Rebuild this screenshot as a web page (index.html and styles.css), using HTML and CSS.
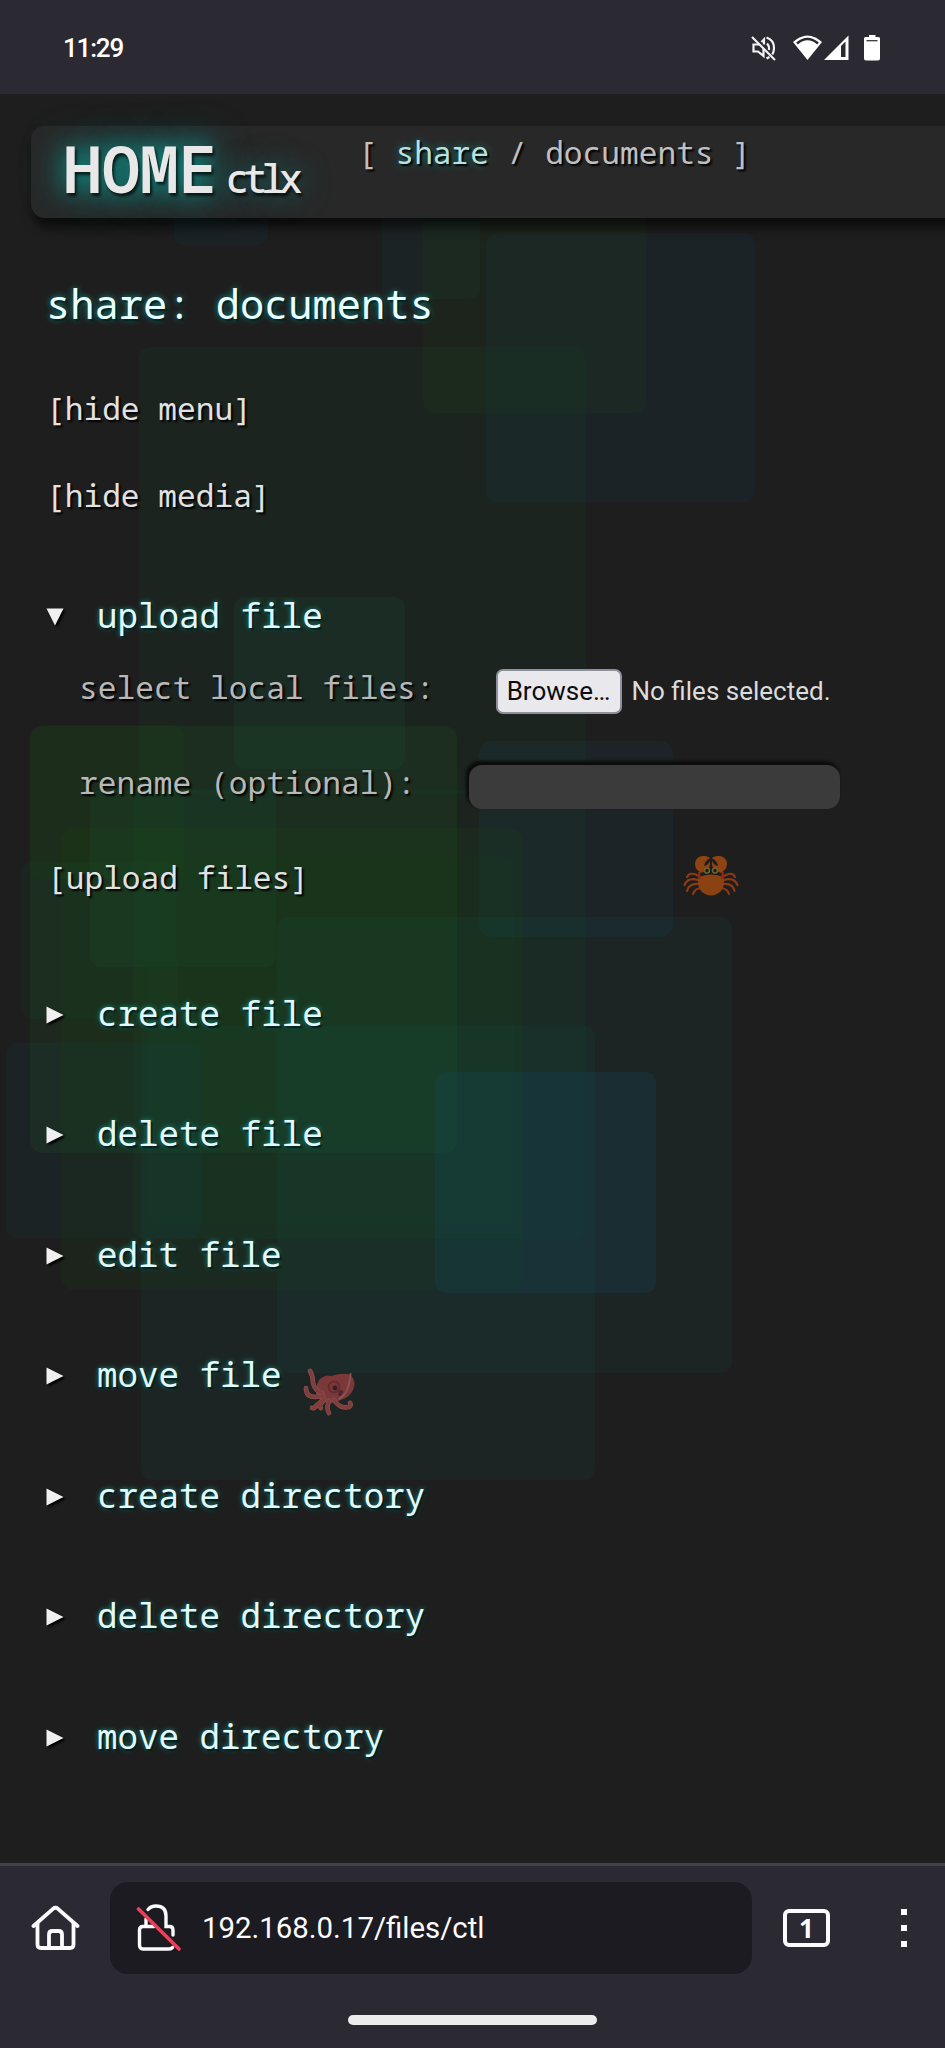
FILE: index.html
```html
<!DOCTYPE html>
<html lang="en">
<head>
<meta charset="utf-8">
<title>share: documents</title>
<link rel="stylesheet" href="styles.css">
</head>
<body>
<div class="screen">
  <div class="statusbar">
    <span class="clock">11:29</span>
    <svg class="status-icons" width="132" height="28" viewBox="750 34 132 28">
      <g fill="none" stroke="#f4f4f6" stroke-width="2.2">
        <path d="M752 37L775 60"/>
        <path d="M759 44.500H753.500V51.500H758L763.500 56V49"/>
        <path d="M761.500 42L764 39.500V44.500"/>
        <path d="M767 43.500Q769.500 46 769 50"/>
        <path d="M766.500 37.500Q774 40 774 48Q774 51.500 772.300 54.500"/>
        <path d="M766.500 58.500L769.500 57"/>
      </g>
      <path d="M793 42Q807.500 29 822 42L807.500 60Z" fill="#fff"/>
      <path d="M797 43.500Q807.500 34.500 818 43.500" fill="none" stroke="#2b2a33" stroke-width="2.6"/>
      <path d="M824 60L848.500 35.500V60Z" fill="#fff"/>
      <path d="M841 46L845.500 41.500V57H841Z" fill="#2b2a33"/>
      <path d="M869 35H875.500V37H878.500Q880 37 880 38.500V58.500Q880 60.500 878 60.500H866Q864 60.500 864 58.500V38.500Q864 37 865.500 37H869Z" fill="#fff"/>
      <path d="M866.500 40.700H877.500" stroke="#2b2a33" stroke-width="1.2"/>
    </svg>
  </div>

  <div class="page">
    <svg class="backdrop" width="945" height="1769" viewBox="0 94 945 1769">
      <g class="squares">
        <rect class="blue" x="174" y="151" width="94" height="94" rx="10"/>
        <rect class="slate" x="382" y="201" width="98" height="98" rx="10"/>
        <rect class="moss" x="423" y="190" width="223" height="223" rx="11"/>
        <rect class="blue" x="486" y="233" width="269" height="269" rx="11"/>
        <rect class="green" x="139" y="347" width="447" height="447" rx="11"/>
        <rect class="jade" x="234" y="597" width="171" height="172" rx="11"/>
        <rect class="leaf" x="30" y="726" width="427" height="427" rx="13"/>
        <rect class="moss" x="29" y="725" width="155" height="154" rx="13"/>
        <rect class="jade" x="90" y="790" width="186" height="177" rx="11"/>
        <rect class="green" x="133" y="790" width="452" height="449" rx="11"/>
        <rect class="moss" x="61" y="828" width="462" height="462" rx="13"/>
        <rect class="faint" x="147" y="857" width="367" height="367" rx="11"/>
        <rect class="green" x="21" y="862" width="157" height="157" rx="11"/>
        <rect class="cyan" x="479" y="741" width="194" height="196" rx="13"/>
        <rect class="teal" x="277" y="917" width="455" height="456" rx="11"/>
        <rect class="teal" x="141" y="1026" width="454" height="454" rx="11"/>
        <rect class="slate" x="6" y="1043" width="195" height="195" rx="11"/>
        <rect class="azure" x="435" y="1072" width="221" height="221" rx="11"/>
      </g>
      <g class="crab">
        <g fill="none" stroke="#8d3914" stroke-width="2.200" stroke-linecap="round">
          <path d="M699 876Q690 871 687 877M698 880Q688 877 684.500 885M699 884Q689 883 687 891M702 888Q695 888 693 894"/>
          <path d="M724 876Q732 871 735 877M724 880Q734 877 737.500 885M723 884Q733 883 734.500 891M720 888Q727 888 729 894"/>
        </g>
        <path d="M701 873Q693 868 695.500 861Q698 855.500 704.500 856Q709 856.500 710 858.500Q705 860 704 866Q708 865.500 710 861Q711 868 705.500 871Z" fill="#8f4212"/>
        <path d="M721 873Q729 868 726.500 861Q724 855.500 717.500 856Q713 856.500 712 858.500Q717 860 718 866Q714 865.500 712 861Q711 868 716.500 871Z" fill="#8f4212"/>
        <path d="M698.500 877Q711 872 723.500 877Q725.500 886 720.500 891.500Q716 895.500 711 895.500Q706 895.500 701.500 891.500Q696.500 886 698.500 877Z" fill="#8b4212"/>
        <path d="M699 872L700 879M723 872L722 879" stroke="#8e2a18" stroke-width="2"/>
        <circle cx="707" cy="870.500" r="2.500" fill="#182020" stroke="#6e642e" stroke-width="1.400"/>
        <circle cx="715" cy="870.500" r="2.500" fill="#182020" stroke="#6e642e" stroke-width="1.400"/>
      </g>
      <g class="octopus">
        <path d="M319 1380Q325 1374 331 1376Q344 1372 351 1375Q357 1383 353 1390Q350 1397 341 1400L329 1404L317 1398Q314 1388 319 1380Z" fill="#7b3838"/>
        <g fill="none" stroke-linecap="round">
          <g stroke="#8c5555" stroke-width="4.600">
            <path d="M310 1371Q313 1376 313 1383Q315 1391 322 1393"/>
            <path d="M306 1388Q306 1397 315 1397L323 1396"/>
            <path d="M312 1408Q314 1409 317 1405L324 1399"/>
            <path d="M324 1400Q318 1406 321 1408M329 1401Q326 1408 329 1413"/>
            <path d="M334 1400Q340 1409 349 1407Q352 1405 350 1403"/>
          </g>
          <path d="M350.500 1374Q349.500 1388 344 1395L339 1399" stroke="#8c5555" stroke-width="1.800"/>
          <g stroke="#833c3c" stroke-width="3.400">
            <path d="M310 1371Q313 1376 313 1383Q315 1391 322 1393"/>
            <path d="M306 1388Q306 1397 315 1397L323 1396"/>
            <path d="M312 1408Q314 1409 317 1405L324 1399"/>
            <path d="M324 1400Q318 1406 321 1408M329 1401Q326 1408 329 1413"/>
            <path d="M334 1400Q340 1409 349 1407Q352 1405 350 1403"/>
          </g>
        </g>
        <circle cx="334" cy="1387" r="5.500" fill="#7b3838" stroke="#602a2e" stroke-width="1.500"/>
        <circle cx="335" cy="1388" r="2.400" fill="#341f25"/>
        <ellipse cx="340.500" cy="1393" rx="2" ry="3.200" transform="rotate(25 340.500 1393)" fill="#542428"/>
      </g>
    </svg>

    <div class="content">
      <header class="topbar">
        <a class="brand"><span class="brand-home">HOME</span><span class="brand-sub">ctlx</span></a>
        <nav class="crumbs">[ <a class="crumb">share</a> / documents ]</nav>
      </header>

      <h1 class="title">share: documents</h1>
      <a class="toggle">[hide menu]</a>
      <a class="toggle">[hide media]</a>

      <section class="upload">
        <h2 class="summary summary-open"><svg class="marker" width="18" height="18" viewBox="0 0 18 18"><path d="M0.500 0.500H17.500L9 17.500Z"/></svg>upload file</h2>
        <div class="field field-file">
          <span class="label">select local files:</span>
          <span class="picker"><span class="browse">Browse…</span><span class="chosen">No files selected.</span></span>
        </div>
        <div class="field field-name">
          <span class="label">rename (optional):</span>
          <span class="textbox"></span>
        </div>
        <a class="submit">[upload files]</a>
      </section>

      <div class="actions">
        <h2 class="summary"><svg class="marker" width="18" height="18" viewBox="0 0 18 18"><path d="M0.500 0.500L17.500 9L0.500 17.500Z"/></svg>create file</h2>
        <h2 class="summary"><svg class="marker" width="18" height="18" viewBox="0 0 18 18"><path d="M0.500 0.500L17.500 9L0.500 17.500Z"/></svg>delete file</h2>
        <h2 class="summary"><svg class="marker" width="18" height="18" viewBox="0 0 18 18"><path d="M0.500 0.500L17.500 9L0.500 17.500Z"/></svg>edit file</h2>
        <h2 class="summary"><svg class="marker" width="18" height="18" viewBox="0 0 18 18"><path d="M0.500 0.500L17.500 9L0.500 17.500Z"/></svg>move file</h2>
        <h2 class="summary"><svg class="marker" width="18" height="18" viewBox="0 0 18 18"><path d="M0.500 0.500L17.500 9L0.500 17.500Z"/></svg>create directory</h2>
        <h2 class="summary"><svg class="marker" width="18" height="18" viewBox="0 0 18 18"><path d="M0.500 0.500L17.500 9L0.500 17.500Z"/></svg>delete directory</h2>
        <h2 class="summary"><svg class="marker" width="18" height="18" viewBox="0 0 18 18"><path d="M0.500 0.500L17.500 9L0.500 17.500Z"/></svg>move directory</h2>
      </div>
    </div>
  </div>

  <div class="browserbar">
    <div class="tools">
      <svg class="home" width="50" height="46" viewBox="0 0 50 46" fill="none" stroke="#fbfbfe" stroke-width="3.800" stroke-linecap="round" stroke-linejoin="round">
        <path d="M2.500 21L22 3.800Q24.500 1.800 27 3.800L46.500 21"/>
        <path d="M6.500 18V39.500Q6.500 43 10 43H39Q42.500 43 42.500 39.500V18"/>
        <path d="M18 42V29.500Q18 26 21.500 26H27.500Q31 26 31 29.500V42"/>
      </svg>
      <div class="urlbox">
        <svg width="46" height="48" viewBox="136 1905 46 48" fill="none" stroke-linecap="round">
          <g stroke="#fbfbfe" stroke-width="3.400">
            <path d="M148 1910.500Q151 1907 156 1907Q166 1907 166 1917V1927.500H169.500Q173 1927.500 173 1931V1936"/>
            <path d="M146 1920V1927.500M154 1927.500H143Q139.500 1927.500 139.500 1931V1946Q139.500 1950 143 1950H169Q171.500 1950 172.500 1948.500"/>
          </g>
          <path d="M138.500 1910L179 1950" stroke="#e8425a" stroke-width="3.600"/>
        </svg>
        <span class="url">192.168.0.17/files/ctl</span>
      </div>
      <span class="tabs">1</span>
      <span class="menu"><i></i><i></i><i></i></span>
    </div>
    <div class="pill"></div>
  </div>
</div>
</body>
</html>
```
FILE: styles.css
```css
* { box-sizing: border-box; }
body { margin: 0; background: #1e1e1e; }
h1, h2 { margin: 0; font-weight: 400; }

.screen {
  width: 945px;
  height: 2048px;
  overflow: hidden;
  display: flex;
  flex-direction: column;
  font-family: "Noto Sans Mono", "DejaVu Sans Mono", monospace;
}

.statusbar {
  height: 94px;
  flex: none;
  background: #2b2a33;
  display: flex;
  align-items: center;
  justify-content: space-between;
  padding: 2px 63px 0 63px;
}
.clock {
  font: 500 26px/30px Roboto, sans-serif;
  letter-spacing: -1.200px;
  color: #fff;
}

.page {
  position: relative;
  height: 1769px;
  flex: none;
  background: #1e1e1e;
  overflow: hidden;
}
.backdrop { position: absolute; left: 0; top: 0; }
.blue { fill: rgba(20, 70, 110, 0.12); }
.slate { fill: rgba(20, 70, 90, 0.12); }
.azure { fill: rgba(20, 85, 120, 0.18); }
.cyan { fill: rgba(20, 80, 100, 0.13); }
.teal { fill: rgba(20, 90, 80, 0.12); }
.jade { fill: rgba(20, 110, 70, 0.11); }
.green { fill: rgba(20, 95, 50, 0.11); }
.leaf { fill: rgba(25, 115, 35, 0.14); }
.moss { fill: rgba(25, 90, 10, 0.11); }
.faint { fill: rgba(20, 90, 20, 0.04); }

.content {
  position: relative;
  display: flex;
  flex-direction: column;
  color: #e2e2e2;
  text-shadow: 2px 2px 2px #000;
}
.topbar {
  margin: 32px 0 0 31px;
  height: 92px;
  width: 960px;
  border-radius: 14px;
  background: #282828;
  box-shadow: 3px 9px 12px rgba(0, 0, 0, 0.62);
  display: flex;
}
.brand {
  width: 327px;
  padding-left: 32px;
  display: flex;
  align-items: baseline;
  line-height: 84px;
  color: #e8e8e8;
}
.brand-home {
  font-size: 65px;
  font-weight: 600;
  letter-spacing: -0.600px;
  text-shadow: 2px 3px 3px rgba(0, 0, 0, 0.7), 0 0 24px #0f9a92, 0 0 40px rgba(10, 150, 145, 0.8);
}
.brand-sub {
  font-size: 40px;
  font-weight: 500;
  letter-spacing: -6.300px;
  margin-left: 9px;
  text-shadow: 2px 3px 3px rgba(0, 0, 0, 0.7), 0 0 30px rgba(15, 154, 146, 0.8);
}
.crumbs {
  font-size: 31.2px;
  line-height: 40px;
  padding-top: 6px;
  white-space: pre;
  color: #c0c0c0;
}
.crumb { color: #b9e2df; text-shadow: 2px 2px 2px #000, 0 0 8px #16837c; }

.title {
  margin: 56px 0 0 46px;
  height: 60px;
  font-size: 40.400px;
  line-height: 60px;
  color: #eaffff;
  text-shadow: 2px 2px 2px #002020, 0 0 6px #14a098;
}
.toggle {
  margin-left: 46px;
  height: 87px;
  font-size: 31.2px;
  line-height: 87px;
}
.title + .toggle { margin-top: 31px; }

.upload { margin-top: 32px; display: flex; flex-direction: column; }
.summary {
  height: 120.500px;
  padding-left: 46px;
  display: flex;
  align-items: center;
  gap: 33px;
  font-size: 34.200px;
  color: #e2f8fa;
  text-shadow: 2px 2px 2px #001a1a, 0 0 5px #149a92;
}
.summary-open { height: 87px; }
.marker { fill: #f0f0f0; margin-top: 5px; filter: drop-shadow(2px 2px 1px #000); }
.field {
  display: flex;
  align-items: center;
  padding-left: 79px;
  font-size: 31.2px;
}
.field-file { height: 66px; }
.field-name { height: 125px; }
.label { color: #b8b8b8; margin-top: -8px; }
.field-name .label { margin-top: -9px; }
.picker {
  margin-left: 61px;
  display: flex;
  align-items: center;
  gap: 10px;
  font: 400 26px/30px Roboto, sans-serif;
  text-shadow: none;
}
.browse {
  width: 126px;
  height: 45px;
  border: 2px solid #8f8f9d;
  border-radius: 7px;
  background: #e9e9ed;
  color: #0c0c0e;
  text-align: center;
  line-height: 41px;
}
.chosen { color: #dcdcdc; }
.textbox {
  margin-left: 53px;
  width: 371px;
  height: 44px;
  border-radius: 13px;
  background: #3b3b3b;
  box-shadow: -2px -3px 3px 1px #0c0c0c;
}
.submit { margin-top: -2px; padding-left: 47px; height: 60px; line-height: 60px; font-size: 31.2px; }
.actions { margin-top: 45px; display: flex; flex-direction: column; }

.browserbar {
  height: 185px;
  flex: none;
  background: #2b2a33;
  border-top: 3px solid #42414d;
  display: flex;
  flex-direction: column;
  align-items: center;
}
.tools {
  width: 100%;
  height: 124px;
  padding: 0 38px 0 31px;
  display: flex;
  align-items: center;
}
.urlbox {
  margin-left: 29px;
  width: 642px;
  height: 92px;
  border-radius: 18px;
  background: #1c1b22;
  padding-left: 26px;
  display: flex;
  align-items: center;
  gap: 20px;
}
.url { font: 400 29.400px/36px Roboto, sans-serif; color: #fbfbfe; }
.tabs {
  margin-left: 31px;
  width: 47px;
  height: 38px;
  border: 4px solid #fbfbfe;
  border-radius: 6px;
  font: 700 26px/30px "Noto Sans", sans-serif;
  text-align: center;
  color: #fbfbfe;
}
.menu {
  margin-left: auto;
  height: 38px;
  display: flex;
  flex-direction: column;
  justify-content: space-between;
}
.menu i { width: 6px; height: 6px; background: #fbfbfe; }
.pill { margin-top: 25px; width: 249px; height: 10px; border-radius: 5px; background: #ececec; }
```
